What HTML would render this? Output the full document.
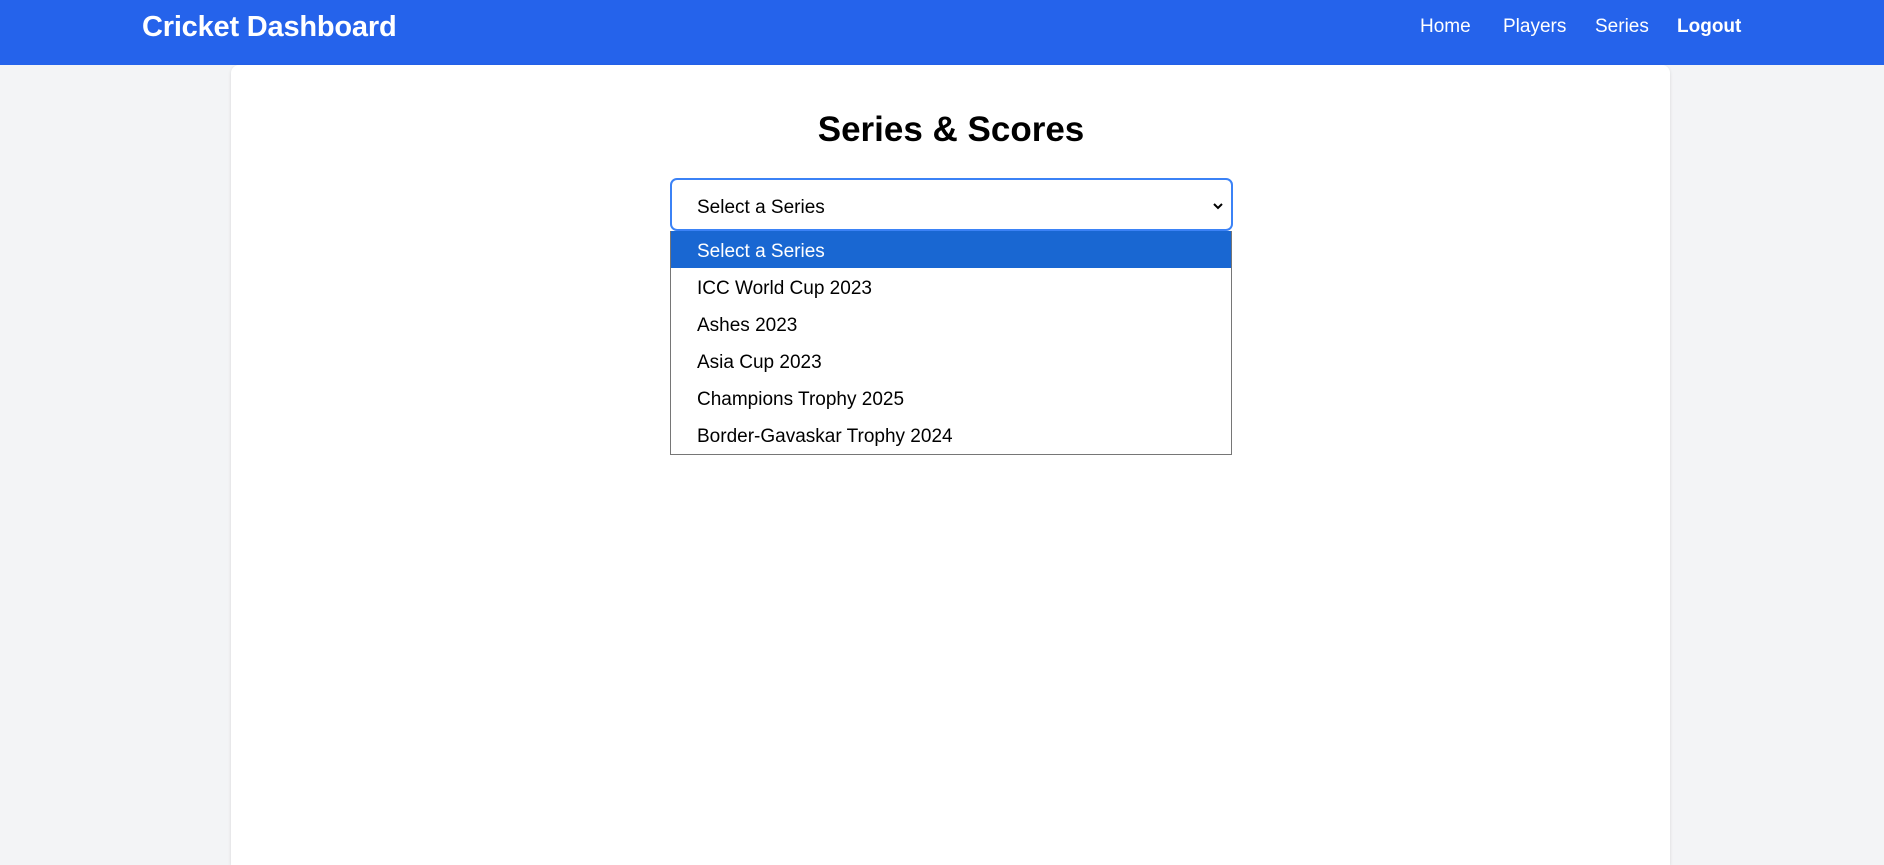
<!DOCTYPE html>
<html><head><meta charset="utf-8"><style>
*{box-sizing:border-box;margin:0;padding:0}
html,body{width:1884px;height:865px;overflow:hidden}
body{background:#f3f4f6;font-family:"Liberation Sans",sans-serif;position:relative}
.hdr{position:absolute;left:0;top:0;width:1884px;height:65px;background:#2563eb;color:#fff}
.brand{position:absolute;left:142px;top:11px;font-size:29px;font-weight:bold;letter-spacing:-0.2px}
.nav{position:absolute;top:16px;font-size:19px}
.card{position:absolute;left:231px;top:65px;width:1439px;height:800px;background:#fff;border-radius:8px 8px 0 0;box-shadow:0 1px 3px rgba(0,0,0,.12)}
h1{position:absolute;left:0;width:1902px;top:110px;text-align:center;font-size:35px;font-weight:bold;color:#000}
.sel{position:absolute;left:670px;top:178px;width:563px;height:53px;border:2px solid #3b82f6;border-radius:7px;background:#fff;font-size:19px;color:#000}
.sel span{position:absolute;left:25px;top:17px}
.sel svg{position:absolute;right:7px;top:21px}
.dd{position:absolute;left:670px;top:231px;width:562px;height:224px;border:1px solid #767676;border-top:none;background:#fff;font-size:19px;color:#000}
.o{height:37px;line-height:41px;padding-left:26px}
.o.h{background:#1967d2;color:#fff}
</style></head><body>
<div class="hdr">
<div class="brand">Cricket Dashboard</div>
<div class="nav" style="left:1420px">Home</div>
<div class="nav" style="left:1503px">Players</div>
<div class="nav" style="left:1595px">Series</div>
<div class="nav" style="left:1677px;font-weight:bold">Logout</div>
</div>
<div class="card"></div>
<h1>Series &amp; Scores</h1>
<div class="sel"><span>Select a Series</span><svg width="12" height="10" viewBox="0 0 12 10"><path d="M2 3l4 4 4-4" fill="none" stroke="#000" stroke-width="2"/></svg></div>
<div class="dd">
<div class="o h">Select a Series</div>
<div class="o">ICC World Cup 2023</div>
<div class="o">Ashes 2023</div>
<div class="o">Asia Cup 2023</div>
<div class="o">Champions Trophy 2025</div>
<div class="o">Border-Gavaskar Trophy 2024</div>
</div>
</body></html>
